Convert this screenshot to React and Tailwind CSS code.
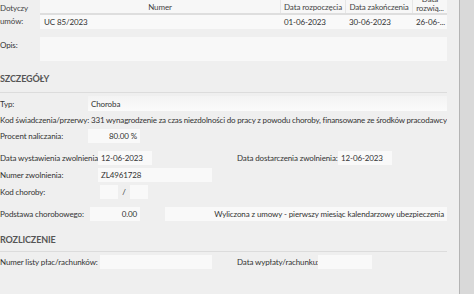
export default function App() {
  const field = "bg-[#f9f9f9] h-[14px] flex items-center px-[3px] overflow-hidden shrink-0";
  return (
    <div
      className="w-[474px] h-[294px] flex bg-[#efefef] overflow-hidden text-[8px] tracking-[-0.12px] text-[#333] leading-[10px] whitespace-nowrap"
      style={{ fontFamily: 'Lato, "Open Sans", sans-serif' }}
    >
      <div className="w-[460px] shrink-0 border-r border-[#b4b4b4] pr-[12px] flex flex-col">
        {/* Dotyczy umów */}
        <div className="flex h-[37px]">
          <div className="w-[40px] shrink-0 pt-[2px] leading-[13px] text-[#444]">
            Dotyczy
            <br />
            umów:
          </div>
          <div className="flex-1 flex flex-col">
            <div className="h-[15px] flex bg-[#f7f7f7] border-b-2 border-[#dedede] text-[#444]">
              <div className="w-[240px] flex items-center justify-center">Numer</div>
              <div className="w-[65px] flex items-center justify-center border-l border-[#e6e6e6]">Data rozpoczęcia</div>
              <div className="w-[67px] flex items-center justify-center border-l border-[#e6e6e6]">Data zakończenia</div>
              <div className="flex-1 flex flex-col items-center justify-end overflow-hidden border-l border-[#e6e6e6] leading-[9px]">
                <span>Data</span>
                <span>rozwią...</span>
              </div>
            </div>
            <div className="h-[14px] flex items-center bg-[#f9f9f9]">
              <div className="w-[240px] pl-[4px]">UC 85/2023</div>
              <div className="w-[65px] pl-[4px]">01-06-2023</div>
              <div className="w-[67px] pl-[4px]">30-06-2023</div>
              <div className="flex-1 pl-[4px]">26-06-...</div>
            </div>
          </div>
        </div>
        {/* Opis */}
        <div className="flex h-[24px]">
          <div className="w-[40px] shrink-0 pt-[3px]">Opis:</div>
          <div className="flex-1 bg-[#f8f8f8]"></div>
        </div>

        {/* SZCZEGÓŁY */}
        <div className="mt-[13px] h-[19px] border-b border-[#dcdcdc] text-[9px] font-bold text-[#555]">
          SZCZEGÓŁY
        </div>
        <div className="mt-[3px] flex flex-col gap-[1px]">
          <div className="flex items-center h-[15px]">
            <div className="w-[88px] shrink-0">Typ:</div>
            <div className="flex-1 h-[15px] flex items-center px-[3px] bg-gradient-to-b from-[#f3f3f3] to-[#fbfbfb]">Choroba</div>
          </div>
          <div className="flex items-center h-[15px]">
            <div className="w-[89px] shrink-0">Kod świadczenia/przerwy:</div>
            <div className="flex-1 flex items-center overflow-hidden">
              <span className="w-[17px] shrink-0 pl-[2px]">331</span>
              <span className="tracking-[-0.18px]">wynagrodzenie za czas niezdolności do pracy z powodu choroby, finansowane ze środków pracodawcy</span>
            </div>
          </div>
          <div className="flex items-center h-[15px]">
            <div className="w-[88px] shrink-0">Procent naliczania:</div>
            <div className={`${field} w-[52px] justify-end`}>80.00 %</div>
          </div>
        </div>

        <div className="mt-[8px] flex flex-col gap-[3px]">
          <div className="flex items-center h-[14px]">
            <div className="w-[98px] shrink-0">Data wystawienia zwolnienia:</div>
            <div className={`${field} w-[54px]`}>12-06-2023</div>
            <div className="w-[85px] shrink-0"></div>
            <div className="w-[101px] shrink-0">Data dostarczenia zwolnienia:</div>
            <div className={`${field} w-[54px]`}>12-06-2023</div>
          </div>
          <div className="flex items-center h-[14px]">
            <div className="w-[98px] shrink-0">Numer zwolnienia:</div>
            <div className={`${field} w-[114px]`}>ZL4961728</div>
          </div>
          <div className="flex items-center h-[14px]">
            <div className="w-[100px] shrink-0">Kod choroby:</div>
            <div className={`${field} w-[18px]`}></div>
            <div className="w-[12px] text-center">/</div>
            <div className={`${field} w-[18px]`}></div>
          </div>
          <div className="flex items-center h-[14px] mt-[5px]">
            <div className="w-[90px] shrink-0">Podstawa chorobowego:</div>
            <div className={`${field} w-[50px] justify-end`}>0.00</div>
            <div className="w-[25px] shrink-0"></div>
            <div className="flex-1 h-[14px] flex items-center justify-end px-[3px] bg-[#f9f9f9] overflow-hidden">
              Wyliczona z umowy - pierwszy miesiąc kalendarzowy ubezpieczenia
            </div>
          </div>
        </div>

        {/* ROZLICZENIE */}
        <div className="mt-[14px] h-[17px] border-b border-[#dcdcdc] text-[9px] font-bold text-[#555]">
          ROZLICZENIE
        </div>
        <div className="mt-[3px] flex items-center h-[14px]">
          <div className="w-[100px] shrink-0">Numer listy płac/rachunków:</div>
          <div className={`${field} w-[112px]`}></div>
          <div className="w-[25px] shrink-0"></div>
          <div className="w-[81px] shrink-0">Data wypłaty/rachunku:</div>
          <div className={`${field} w-[54px]`}></div>
        </div>
      </div>
      <div className="flex-1 bg-[#d9d9d9]"></div>
    </div>
  );
}
